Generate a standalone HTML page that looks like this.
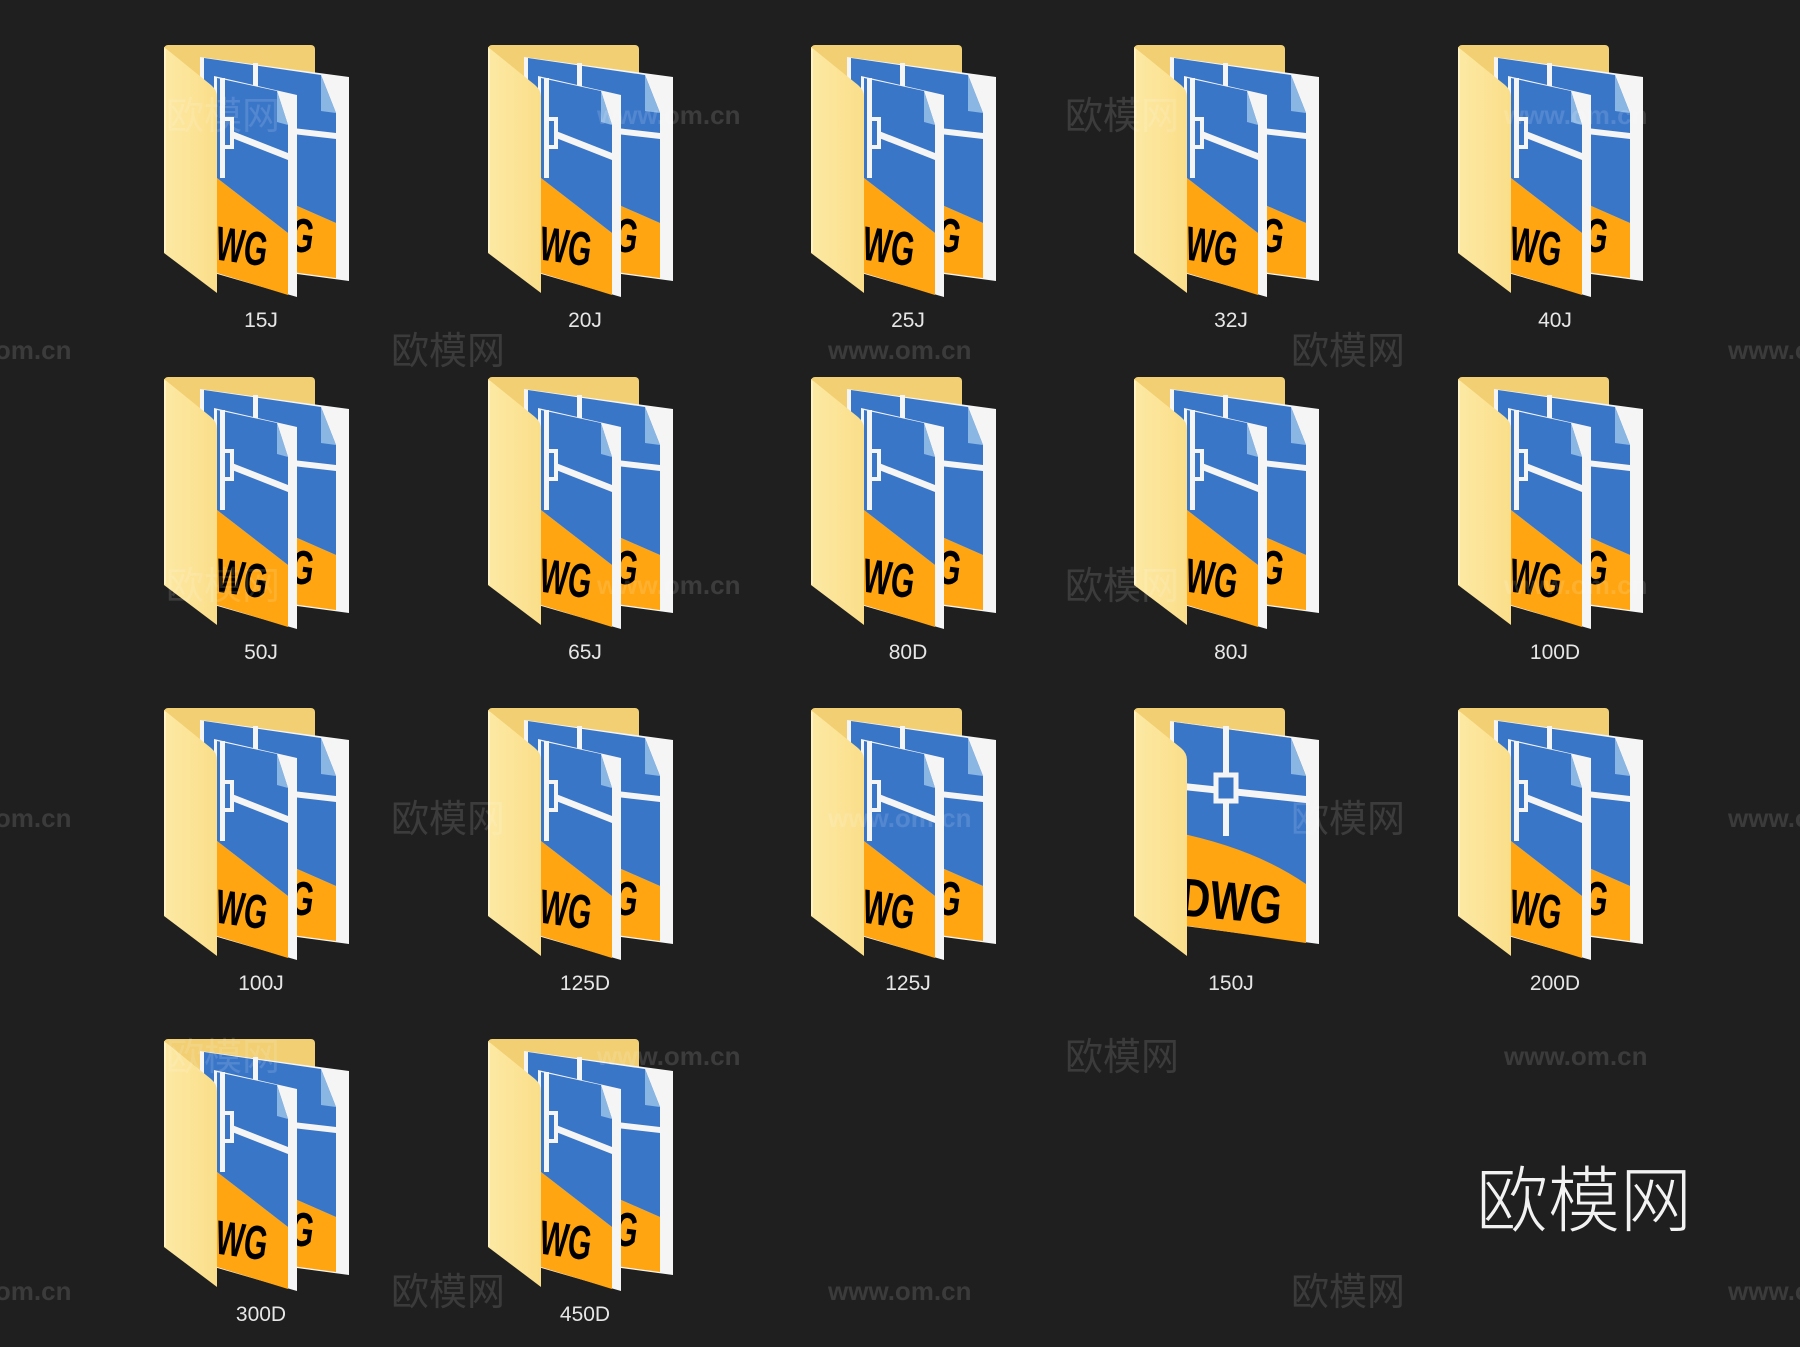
<!DOCTYPE html>
<html><head><meta charset="utf-8">
<style>
html,body{margin:0;padding:0;background:#1f1f1f;}
body{width:1800px;height:1347px;position:relative;overflow:hidden;font-family:"Liberation Sans","Noto Sans CJK SC",sans-serif;}
.f{position:absolute;width:200px;height:290px;}
.f svg{position:absolute;left:0;top:0;}
.lb{position:absolute;left:0;width:194px;top:264px;text-align:center;color:#e6e6e6;font-size:21px;line-height:24px;}
.wm{position:absolute;color:#3b3b3b;font-size:38px;line-height:40px;white-space:nowrap;}
.ww{position:absolute;color:#3b3b3b;font-size:26px;font-weight:bold;line-height:40px;white-space:nowrap;}
.ov{color:rgba(255,255,255,0.13);z-index:5;}
.big{position:absolute;left:1476px;top:1150px;color:#f2f2f2;font-size:72px;line-height:90px;font-family:"Noto Sans CJK SC",sans-serif;font-weight:300;z-index:6;}
</style></head><body>
<svg width="0" height="0" style="position:absolute">
<defs>
<linearGradient id="gp" x1="0" y1="0" x2="1" y2="0"><stop offset="0" stop-color="#fde9a4"/><stop offset="1" stop-color="#fade8a"/></linearGradient>
<symbol id="bk" viewBox="0 0 200 290" overflow="visible">
<rect x="0" y="0" width="151" height="70" rx="4" fill="#f1cf72"/>
<polygon points="36,12 185,32 185,236 36,216" fill="#f5f5f5"/>
<polygon points="40,120 172,178 172,233 40,215" fill="#fea511"/>
<polygon points="40,13 157,30 172,68 172,178 40,120" fill="#3a76c8"/>
<polygon points="157,30 172,68 157,66" fill="#8ab6e4"/>
<rect x="89" y="18" width="5" height="40" fill="#f5f5f5"/>
<polygon points="120,82 172,88 172,94 120,88" fill="#f5f5f5"/>
</symbol>
<symbol id="fd" viewBox="0 0 200 290" overflow="visible">
<polygon points="50,31 133,50 133,252 50,228" fill="#f5f5f5"/>
<polygon points="53,133 124,188 124,250 53,228" fill="#fea511"/>
<polygon points="53,33 113,46 124,80 124,188 53,133" fill="#3a76c8"/>
<polygon points="113,46 124,80 113,77" fill="#8ab6e4"/>
<rect x="56" y="33" width="5" height="100" fill="#f5f5f5"/>
<rect x="58" y="74" width="10" height="28" fill="none" stroke="#f5f5f5" stroke-width="4"/>
<polygon points="68,86 124,108 124,115 68,93" fill="#f5f5f5"/>
</symbol>
<symbol id="fp" viewBox="0 0 200 290" overflow="visible">
<path d="M0,2 L47,40 Q53,45 53,52 L53,248 L0,208 Z" fill="url(#gp)"/>
<path d="M1,4 L1,207" stroke="#fff3c4" stroke-width="2"/>
</symbol>
<symbol id="sd" viewBox="0 0 200 290" overflow="visible">
<rect x="0" y="0" width="151" height="70" rx="4" fill="#f1cf72"/>
<polygon points="36,13 185,32 185,236 36,216" fill="#f5f5f5"/>
<polygon points="40,14 157,30 172,68 172,235 40,216" fill="#fea511"/>
<path d="M40,14 L157,30 L172,68 L172,176 Q120,140 40,124 Z" fill="#3a76c8"/>
<polygon points="157,30 172,68 157,66" fill="#8ab6e4"/>
<rect x="89" y="18" width="6" height="110" fill="#f5f5f5"/>
<polygon points="40,74 172,88 172,95 40,81" fill="#f5f5f5"/>
<rect x="82" y="67" width="20" height="26" fill="#3a76c8" stroke="#f5f5f5" stroke-width="5"/>
</symbol>
</defs>
</svg>

<div class="f" style="left:164px;top:45px"><svg width="200" height="290"><use href="#bk" width="200" height="290"/><text x="98" y="205" font-size="48" font-weight="bold" textLength="52" lengthAdjust="spacingAndGlyphs" transform="rotate(8 124 190)" font-family="Liberation Sans">WG</text><use href="#fd" width="200" height="290"/><text x="52" y="218" font-size="48" font-weight="bold" textLength="52" lengthAdjust="spacingAndGlyphs" transform="rotate(8 78 200)" font-family="Liberation Sans">WG</text><use href="#fp" width="200" height="290"/></svg><div class="lb">15J</div></div>
<div class="f" style="left:488px;top:45px"><svg width="200" height="290"><use href="#bk" width="200" height="290"/><text x="98" y="205" font-size="48" font-weight="bold" textLength="52" lengthAdjust="spacingAndGlyphs" transform="rotate(8 124 190)" font-family="Liberation Sans">WG</text><use href="#fd" width="200" height="290"/><text x="52" y="218" font-size="48" font-weight="bold" textLength="52" lengthAdjust="spacingAndGlyphs" transform="rotate(8 78 200)" font-family="Liberation Sans">WG</text><use href="#fp" width="200" height="290"/></svg><div class="lb">20J</div></div>
<div class="f" style="left:811px;top:45px"><svg width="200" height="290"><use href="#bk" width="200" height="290"/><text x="98" y="205" font-size="48" font-weight="bold" textLength="52" lengthAdjust="spacingAndGlyphs" transform="rotate(8 124 190)" font-family="Liberation Sans">WG</text><use href="#fd" width="200" height="290"/><text x="52" y="218" font-size="48" font-weight="bold" textLength="52" lengthAdjust="spacingAndGlyphs" transform="rotate(8 78 200)" font-family="Liberation Sans">WG</text><use href="#fp" width="200" height="290"/></svg><div class="lb">25J</div></div>
<div class="f" style="left:1134px;top:45px"><svg width="200" height="290"><use href="#bk" width="200" height="290"/><text x="98" y="205" font-size="48" font-weight="bold" textLength="52" lengthAdjust="spacingAndGlyphs" transform="rotate(8 124 190)" font-family="Liberation Sans">WG</text><use href="#fd" width="200" height="290"/><text x="52" y="218" font-size="48" font-weight="bold" textLength="52" lengthAdjust="spacingAndGlyphs" transform="rotate(8 78 200)" font-family="Liberation Sans">WG</text><use href="#fp" width="200" height="290"/></svg><div class="lb">32J</div></div>
<div class="f" style="left:1458px;top:45px"><svg width="200" height="290"><use href="#bk" width="200" height="290"/><text x="98" y="205" font-size="48" font-weight="bold" textLength="52" lengthAdjust="spacingAndGlyphs" transform="rotate(8 124 190)" font-family="Liberation Sans">WG</text><use href="#fd" width="200" height="290"/><text x="52" y="218" font-size="48" font-weight="bold" textLength="52" lengthAdjust="spacingAndGlyphs" transform="rotate(8 78 200)" font-family="Liberation Sans">WG</text><use href="#fp" width="200" height="290"/></svg><div class="lb">40J</div></div>

<div class="f" style="left:164px;top:377px"><svg width="200" height="290"><use href="#bk" width="200" height="290"/><text x="98" y="205" font-size="48" font-weight="bold" textLength="52" lengthAdjust="spacingAndGlyphs" transform="rotate(8 124 190)" font-family="Liberation Sans">WG</text><use href="#fd" width="200" height="290"/><text x="52" y="218" font-size="48" font-weight="bold" textLength="52" lengthAdjust="spacingAndGlyphs" transform="rotate(8 78 200)" font-family="Liberation Sans">WG</text><use href="#fp" width="200" height="290"/></svg><div class="lb">50J</div></div>
<div class="f" style="left:488px;top:377px"><svg width="200" height="290"><use href="#bk" width="200" height="290"/><text x="98" y="205" font-size="48" font-weight="bold" textLength="52" lengthAdjust="spacingAndGlyphs" transform="rotate(8 124 190)" font-family="Liberation Sans">WG</text><use href="#fd" width="200" height="290"/><text x="52" y="218" font-size="48" font-weight="bold" textLength="52" lengthAdjust="spacingAndGlyphs" transform="rotate(8 78 200)" font-family="Liberation Sans">WG</text><use href="#fp" width="200" height="290"/></svg><div class="lb">65J</div></div>
<div class="f" style="left:811px;top:377px"><svg width="200" height="290"><use href="#bk" width="200" height="290"/><text x="98" y="205" font-size="48" font-weight="bold" textLength="52" lengthAdjust="spacingAndGlyphs" transform="rotate(8 124 190)" font-family="Liberation Sans">WG</text><use href="#fd" width="200" height="290"/><text x="52" y="218" font-size="48" font-weight="bold" textLength="52" lengthAdjust="spacingAndGlyphs" transform="rotate(8 78 200)" font-family="Liberation Sans">WG</text><use href="#fp" width="200" height="290"/></svg><div class="lb">80D</div></div>
<div class="f" style="left:1134px;top:377px"><svg width="200" height="290"><use href="#bk" width="200" height="290"/><text x="98" y="205" font-size="48" font-weight="bold" textLength="52" lengthAdjust="spacingAndGlyphs" transform="rotate(8 124 190)" font-family="Liberation Sans">WG</text><use href="#fd" width="200" height="290"/><text x="52" y="218" font-size="48" font-weight="bold" textLength="52" lengthAdjust="spacingAndGlyphs" transform="rotate(8 78 200)" font-family="Liberation Sans">WG</text><use href="#fp" width="200" height="290"/></svg><div class="lb">80J</div></div>
<div class="f" style="left:1458px;top:377px"><svg width="200" height="290"><use href="#bk" width="200" height="290"/><text x="98" y="205" font-size="48" font-weight="bold" textLength="52" lengthAdjust="spacingAndGlyphs" transform="rotate(8 124 190)" font-family="Liberation Sans">WG</text><use href="#fd" width="200" height="290"/><text x="52" y="218" font-size="48" font-weight="bold" textLength="52" lengthAdjust="spacingAndGlyphs" transform="rotate(8 78 200)" font-family="Liberation Sans">WG</text><use href="#fp" width="200" height="290"/></svg><div class="lb">100D</div></div>

<div class="f" style="left:164px;top:708px"><svg width="200" height="290"><use href="#bk" width="200" height="290"/><text x="98" y="205" font-size="48" font-weight="bold" textLength="52" lengthAdjust="spacingAndGlyphs" transform="rotate(8 124 190)" font-family="Liberation Sans">WG</text><use href="#fd" width="200" height="290"/><text x="52" y="218" font-size="48" font-weight="bold" textLength="52" lengthAdjust="spacingAndGlyphs" transform="rotate(8 78 200)" font-family="Liberation Sans">WG</text><use href="#fp" width="200" height="290"/></svg><div class="lb">100J</div></div>
<div class="f" style="left:488px;top:708px"><svg width="200" height="290"><use href="#bk" width="200" height="290"/><text x="98" y="205" font-size="48" font-weight="bold" textLength="52" lengthAdjust="spacingAndGlyphs" transform="rotate(8 124 190)" font-family="Liberation Sans">WG</text><use href="#fd" width="200" height="290"/><text x="52" y="218" font-size="48" font-weight="bold" textLength="52" lengthAdjust="spacingAndGlyphs" transform="rotate(8 78 200)" font-family="Liberation Sans">WG</text><use href="#fp" width="200" height="290"/></svg><div class="lb">125D</div></div>
<div class="f" style="left:811px;top:708px"><svg width="200" height="290"><use href="#bk" width="200" height="290"/><text x="98" y="205" font-size="48" font-weight="bold" textLength="52" lengthAdjust="spacingAndGlyphs" transform="rotate(8 124 190)" font-family="Liberation Sans">WG</text><use href="#fd" width="200" height="290"/><text x="52" y="218" font-size="48" font-weight="bold" textLength="52" lengthAdjust="spacingAndGlyphs" transform="rotate(8 78 200)" font-family="Liberation Sans">WG</text><use href="#fp" width="200" height="290"/></svg><div class="lb">125J</div></div>
<div class="f" style="left:1134px;top:708px"><svg width="200" height="290"><use href="#sd" width="200" height="290"/><text x="46" y="212" font-size="54" font-weight="bold" textLength="102" lengthAdjust="spacingAndGlyphs" transform="rotate(5 98 195)" font-family="Liberation Sans">DWG</text><use href="#fp" width="200" height="290"/></svg><div class="lb">150J</div></div>
<div class="f" style="left:1458px;top:708px"><svg width="200" height="290"><use href="#bk" width="200" height="290"/><text x="98" y="205" font-size="48" font-weight="bold" textLength="52" lengthAdjust="spacingAndGlyphs" transform="rotate(8 124 190)" font-family="Liberation Sans">WG</text><use href="#fd" width="200" height="290"/><text x="52" y="218" font-size="48" font-weight="bold" textLength="52" lengthAdjust="spacingAndGlyphs" transform="rotate(8 78 200)" font-family="Liberation Sans">WG</text><use href="#fp" width="200" height="290"/></svg><div class="lb">200D</div></div>

<div class="f" style="left:164px;top:1039px"><svg width="200" height="290"><use href="#bk" width="200" height="290"/><text x="98" y="205" font-size="48" font-weight="bold" textLength="52" lengthAdjust="spacingAndGlyphs" transform="rotate(8 124 190)" font-family="Liberation Sans">WG</text><use href="#fd" width="200" height="290"/><text x="52" y="218" font-size="48" font-weight="bold" textLength="52" lengthAdjust="spacingAndGlyphs" transform="rotate(8 78 200)" font-family="Liberation Sans">WG</text><use href="#fp" width="200" height="290"/></svg><div class="lb">300D</div></div>
<div class="f" style="left:488px;top:1039px"><svg width="200" height="290"><use href="#bk" width="200" height="290"/><text x="98" y="205" font-size="48" font-weight="bold" textLength="52" lengthAdjust="spacingAndGlyphs" transform="rotate(8 124 190)" font-family="Liberation Sans">WG</text><use href="#fd" width="200" height="290"/><text x="52" y="218" font-size="48" font-weight="bold" textLength="52" lengthAdjust="spacingAndGlyphs" transform="rotate(8 78 200)" font-family="Liberation Sans">WG</text><use href="#fp" width="200" height="290"/></svg><div class="lb">450D</div></div>

<div class="wm ov" style="left:166px;top:97px">欧模网</div>
<div class="ww ov" style="left:597px;top:95px">www.om.cn</div>
<div class="wm ov" style="left:1065px;top:97px">欧模网</div>
<div class="ww ov" style="left:1504px;top:95px">www.om.cn</div>

<div class="ww" style="left:-72px;top:330px">www.om.cn</div>
<div class="wm" style="left:391px;top:332px">欧模网</div>
<div class="ww" style="left:828px;top:330px">www.om.cn</div>
<div class="wm" style="left:1291px;top:332px">欧模网</div>
<div class="ww" style="left:1728px;top:330px">www.om.cn</div>

<div class="wm ov" style="left:166px;top:567px">欧模网</div>
<div class="ww ov" style="left:597px;top:565px">www.om.cn</div>
<div class="wm ov" style="left:1065px;top:567px">欧模网</div>
<div class="ww ov" style="left:1504px;top:565px">www.om.cn</div>

<div class="ww" style="left:-72px;top:798px">www.om.cn</div>
<div class="wm ov" style="left:391px;top:800px">欧模网</div>
<div class="ww ov" style="left:828px;top:798px">www.om.cn</div>
<div class="wm ov" style="left:1291px;top:800px">欧模网</div>
<div class="ww" style="left:1728px;top:798px">www.om.cn</div>

<div class="wm ov" style="left:166px;top:1038px">欧模网</div>
<div class="ww ov" style="left:597px;top:1036px">www.om.cn</div>
<div class="wm" style="left:1065px;top:1038px">欧模网</div>
<div class="ww" style="left:1504px;top:1036px">www.om.cn</div>

<div class="ww" style="left:-72px;top:1271px">www.om.cn</div>
<div class="wm" style="left:391px;top:1273px">欧模网</div>
<div class="ww" style="left:828px;top:1271px">www.om.cn</div>
<div class="wm" style="left:1291px;top:1273px">欧模网</div>
<div class="ww" style="left:1728px;top:1271px">www.om.cn</div>

<div class="big">欧模网</div>
</body></html>
